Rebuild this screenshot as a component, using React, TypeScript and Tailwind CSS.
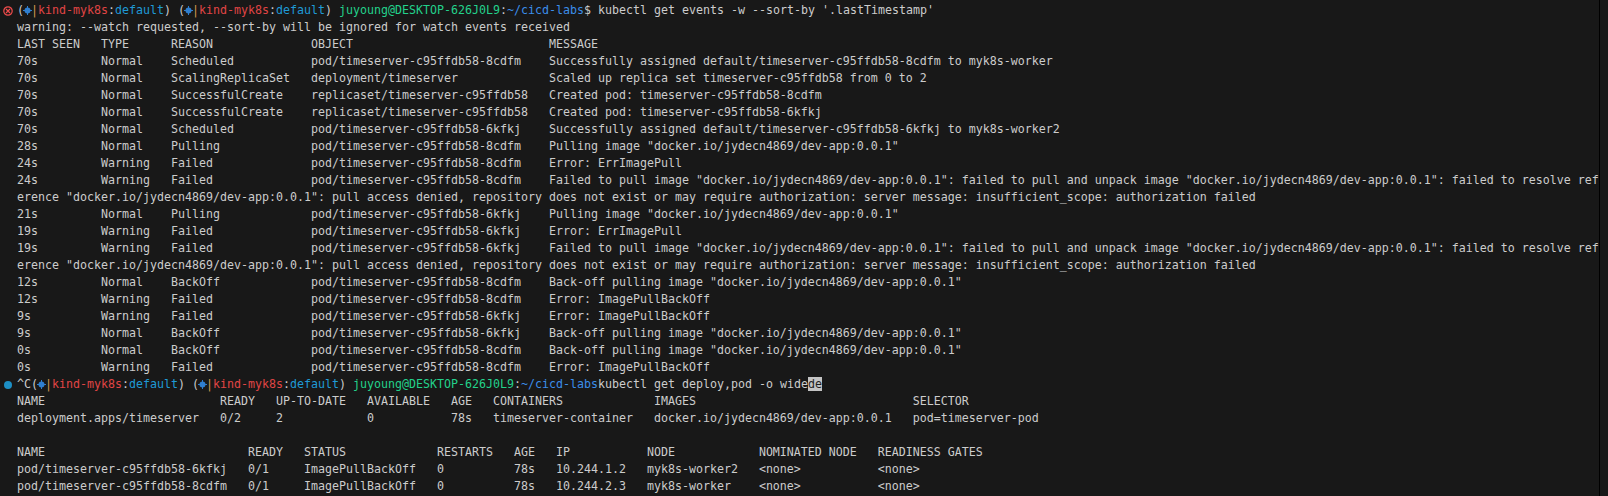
const POD_A = "pod/timeserver-c95ffdb58-8cdfm";
const POD_B = "pod/timeserver-c95ffdb58-6kfkj";
const IMG = '"docker.io/jydecn4869/dev-app:0.0.1"';

const event = (age: string, type: string, reason: string, obj: string, msg: string) =>
  age.padEnd(12) + type.padEnd(10) + reason.padEnd(20) + obj.padEnd(34) + msg;

const EVENTS_TOP = [
  "warning: --watch requested, --sort-by will be ignored for watch events received",
  event("LAST SEEN", "TYPE", "REASON", "OBJECT", "MESSAGE"),
  event("70s", "Normal", "Scheduled", POD_A, "Successfully assigned default/timeserver-c95ffdb58-8cdfm to myk8s-worker"),
  event("70s", "Normal", "ScalingReplicaSet", "deployment/timeserver", "Scaled up replica set timeserver-c95ffdb58 from 0 to 2"),
  event("70s", "Normal", "SuccessfulCreate", "replicaset/timeserver-c95ffdb58", "Created pod: timeserver-c95ffdb58-8cdfm"),
  event("70s", "Normal", "SuccessfulCreate", "replicaset/timeserver-c95ffdb58", "Created pod: timeserver-c95ffdb58-6kfkj"),
  event("70s", "Normal", "Scheduled", POD_B, "Successfully assigned default/timeserver-c95ffdb58-6kfkj to myk8s-worker2"),
  event("28s", "Normal", "Pulling", POD_A, `Pulling image ${IMG}`),
  event("24s", "Warning", "Failed", POD_A, "Error: ErrImagePull"),
  event("24s", "Warning", "Failed", POD_A, `Failed to pull image ${IMG}: failed to pull and unpack image ${IMG}: failed to resolve ref`),
  `erence ${IMG}: pull access denied, repository does not exist or may require authorization: server message: insufficient_scope: authorization failed`,
  event("21s", "Normal", "Pulling", POD_B, `Pulling image ${IMG}`),
  event("19s", "Warning", "Failed", POD_B, "Error: ErrImagePull"),
  event("19s", "Warning", "Failed", POD_B, `Failed to pull image ${IMG}: failed to pull and unpack image ${IMG}: failed to resolve ref`),
  `erence ${IMG}: pull access denied, repository does not exist or may require authorization: server message: insufficient_scope: authorization failed`,
  event("12s", "Normal", "BackOff", POD_A, `Back-off pulling image ${IMG}`),
  event("12s", "Warning", "Failed", POD_A, "Error: ImagePullBackOff"),
  event("9s", "Warning", "Failed", POD_B, "Error: ImagePullBackOff"),
  event("9s", "Normal", "BackOff", POD_B, `Back-off pulling image ${IMG}`),
  event("0s", "Normal", "BackOff", POD_A, `Back-off pulling image ${IMG}`),
  event("0s", "Warning", "Failed", POD_A, "Error: ImagePullBackOff"),
];

const deployRow = (a: string, b: string, c: string, d: string, e: string, f: string, g: string, h: string) =>
  a.padEnd(29) + b.padEnd(8) + c.padEnd(13) + d.padEnd(12) + e.padEnd(6) + f.padEnd(23) + g.padEnd(37) + h;

const podRow = (a: string, b: string, c: string, d: string, e: string, f: string, g: string, h: string, i: string) =>
  a.padEnd(33) + b.padEnd(8) + c.padEnd(19) + d.padEnd(11) + e.padEnd(6) + f.padEnd(13) + g.padEnd(16) + h.padEnd(17) + i;

const WIDE = [
  deployRow("NAME", "READY", "UP-TO-DATE", "AVAILABLE", "AGE", "CONTAINERS", "IMAGES", "SELECTOR"),
  deployRow("deployment.apps/timeserver", "0/2", "2", "0", "78s", "timeserver-container", "docker.io/jydecn4869/dev-app:0.0.1", "pod=timeserver-pod"),
  " ",
  podRow("NAME", "READY", "STATUS", "RESTARTS", "AGE", "IP", "NODE", "NOMINATED NODE", "READINESS GATES"),
  podRow(POD_B, "0/1", "ImagePullBackOff", "0", "78s", "10.244.1.2", "myk8s-worker2", "<none>", "<none>"),
  podRow(POD_A, "0/1", "ImagePullBackOff", "0", "78s", "10.244.2.3", "myk8s-worker", "<none>", "<none>"),
];

function Helm() {
  return (
    <span className="inline-block w-[7px] h-[17px] relative align-top">
      <svg width="9" height="9" viewBox="0 0 9 9" className="absolute left-[-1px] top-[4px]" fill="#2f7fd0">
        <circle cx="4.5" cy="4.5" r="3" />
        <path d="M4 0h1v9H4zM0 4h9v1H0z" />
      </svg>
    </span>
  );
}

function KubePrompt() {
  return (
    <>
      (<Helm />
      <span className="text-[#d19a50]">|</span>
      <span className="text-[#e04545]">kind-myk8s</span>:<span className="text-[#1f9ad6]">default</span>)
    </>
  );
}

function ShellPrompt() {
  return (
    <>
      <span className="text-[#23d18b]">juyoung@DESKTOP-626J0L9</span>:<span className="text-[#3b8eea]">~/cicd-labs</span>
    </>
  );
}

function Row({ mark, children }: { mark?: "error" | "dot"; children: React.ReactNode }) {
  return (
    <div className="flex h-[17px] leading-[17px]">
      <div className="w-[17px] shrink-0 flex items-center justify-center">
        {mark === "error" && (
          <svg width="10" height="10" viewBox="0 0 10 10" fill="none" stroke="#f14c4c" strokeWidth="1.2" className="ml-[-1px]">
            <circle cx="5" cy="5" r="4.2" />
            <path d="M3 3l4 4M7 3l-4 4" />
          </svg>
        )}
        {mark === "dot" && <div className="w-[8px] h-[8px] rounded-full bg-[#1d8fc4] ml-[-1px]" />}
      </div>
      <div className="whitespace-pre">{children}</div>
    </div>
  );
}

export default function App() {
  return (
    <div className="w-[1608px] h-[496px] bg-[#181818] overflow-hidden">
      <div className="w-[1600px] h-full border-r border-black pt-[2px] text-[#cccccc] text-[11.63px] font-['DejaVu_Sans_Mono','Liberation_Mono',monospace]">
        <Row mark="error">
          <KubePrompt /> <KubePrompt /> <ShellPrompt />$ kubectl get events -w --sort-by '.lastTimestamp'
        </Row>
        {EVENTS_TOP.map((line, i) => (
          <Row key={i}>{line}</Row>
        ))}
        <Row mark="dot">
          ^C<KubePrompt /> <KubePrompt /> <ShellPrompt />
          kubectl get deploy,pod -o wide<span className="bg-[#c4c4c4] text-[#1e1e1e]">de</span>
        </Row>
        {WIDE.map((line, i) => (
          <Row key={i}>{line}</Row>
        ))}
      </div>
    </div>
  );
}
